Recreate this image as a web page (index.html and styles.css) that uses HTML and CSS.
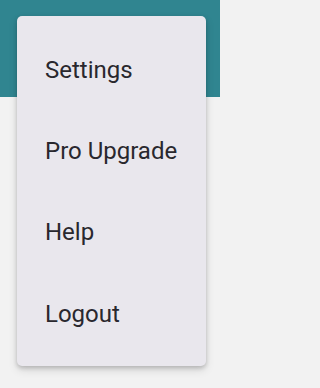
FILE: index.html
```html
<!DOCTYPE html>
<html>
<head>
<meta charset="utf-8">
<link rel="stylesheet" href="styles.css">
</head>
<body>
<div class="appbar"></div>
<div class="menu">
  <div class="item">Settings</div>
  <div class="item">Pro Upgrade</div>
  <div class="item">Help</div>
  <div class="item">Logout</div>
</div>
</body>
</html>
```
FILE: styles.css
```css
html, body {
  margin: 0;
  padding: 0;
}
html {
  background: #f2f2f2;
}
body {
  width: 220px;
  height: 388px;
  background: #f2f2f2;
  font-family: Roboto, "Noto Sans", sans-serif;
  position: relative;
  overflow: hidden;
}
.appbar {
  height: 97px;
  background: #308590;
}
.menu {
  position: absolute;
  left: 17px;
  top: 16px;
  width: 189px;
  height: 350px;
  box-sizing: border-box;
  padding: 13px 0 0;
  background: #e9e7ed;
  border-radius: 5px;
  box-shadow: 0 2px 4px rgba(0,0,0,0.18), 0 4px 10px rgba(0,0,0,0.12);
  display: flex;
  flex-direction: column;
}
.item {
  height: 81.4px;
  flex: none;
  display: flex;
  align-items: center;
  padding-left: 28px;
  font-size: 24px;
  font-weight: 400;
  color: #29282e;
}
```
